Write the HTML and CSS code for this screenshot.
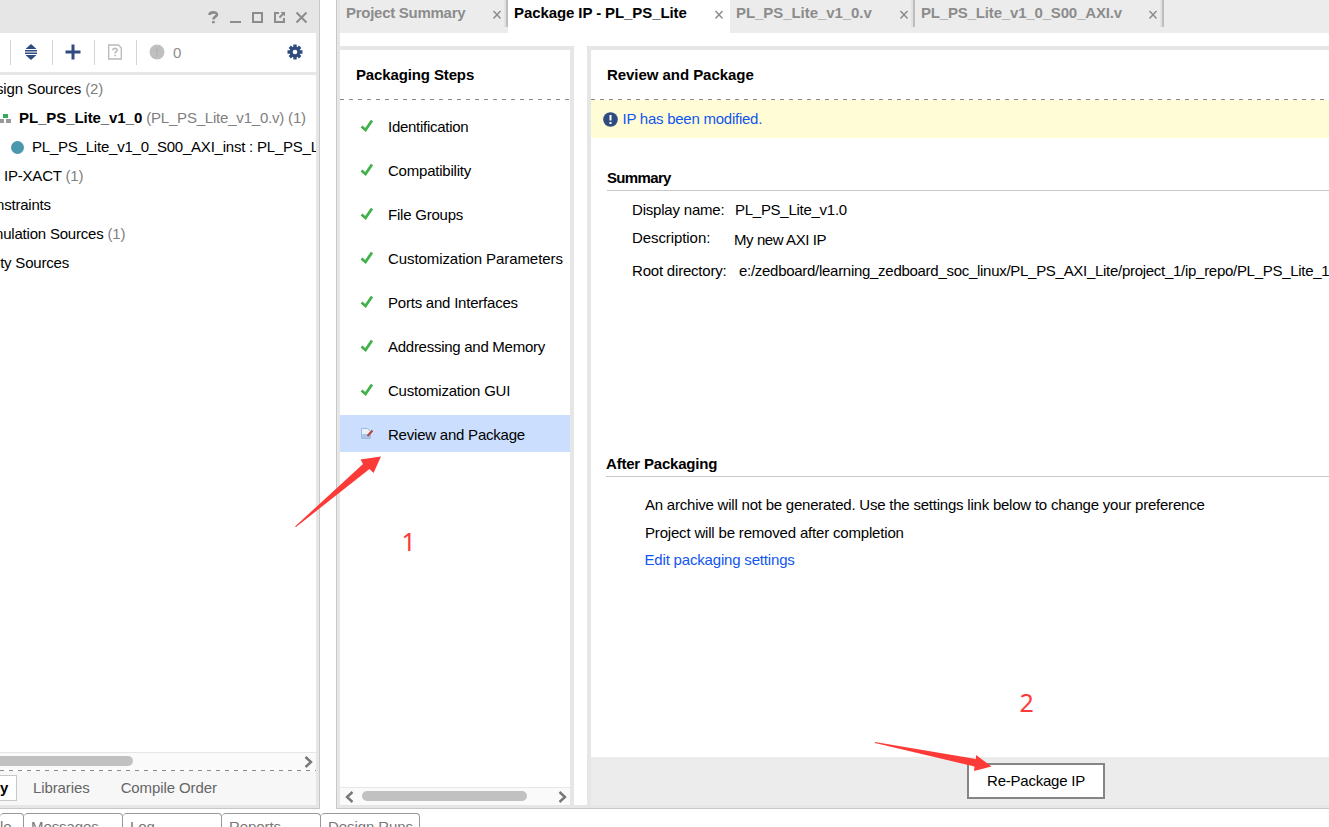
FILE: index.html
```html
<!DOCTYPE html>
<html lang="en">
<head>
<meta charset="utf-8">
<title>Package IP</title>
<link rel="stylesheet" href="styles.css">
</head>
<body>
<div class="workspace">
  <section class="sources">
    <header class="titlebar">
      <svg width="106" height="16" viewBox="0 0 106 16" fill="none" stroke="#8c8c8c" stroke-width="2">
        <path d="M1.500 6C1.500 2.600 9 2.500 9 5.500C9 7.700 5.400 7.600 5.400 10.500M5.400 12v2.200" stroke-width="2.600"/>
        <path d="M22 13h11"/>
        <path d="M45 4h9v9h-9z"/>
        <path d="M71 4h-4v9h9v-4M71.500 8.500l4-4"/><path d="M72.500 3H77v4.500z" fill="#8c8c8c" stroke="none"/>
        <path d="M88.500 3.500l10 10M98.500 3.500l-10 10"/>
      </svg>
    </header>
    <div class="toolbar">
      <i class="sep"></i>
      <span class="tool"><svg width="14" height="16" viewBox="0 0 14 16" fill="#2f4b80"><path d="M7 0l5.500 5H1.500zM1 6h12v1.500H1zM1 8.500h12V10H1zM1.500 11h11L7 16z"/></svg></span>
      <i class="sep"></i>
      <span class="tool"><svg width="16" height="16" viewBox="0 0 16 16" fill="none" stroke="#2f4b80" stroke-width="3"><path d="M8 .5v15M.5 8h15"/></svg></span>
      <i class="sep"></i>
      <span class="tool"><svg width="14" height="16" viewBox="0 0 14 16" fill="none" stroke="#b9b9b9"><path d="M.7 1h9.800L13.300 4v11H.7z" stroke-width="1.300"/><path d="M4.700 6.200C4.700 3.700 9.300 3.800 9.200 6.200C9.100 7.600 7 7.600 7 9.500M7 10.700v1.600" stroke-width="1.600"/></svg></span>
      <i class="sep"></i>
      <span class="count"><svg width="16" height="16" viewBox="0 0 16 16"><circle cx="8" cy="8" r="7.500" fill="#bfbfbf"/><path d="M8 4v5M8 10.500v1.500" stroke="#b3b3b3" stroke-width="1.500"/></svg>0</span>
      <svg class="gear" width="16" height="16" viewBox="-8 -8 16 16"><g stroke="#2f4b80" stroke-width="3.400"><path d="M0-7.500v15M-7.500 0h15M-5.200-5.200l10.400 10.400M5.200-5.200l-10.400 10.400"/></g><circle r="5.400" fill="#2f4b80"/><circle r="2.300" fill="#fff"/></svg>
    </div>
    <div class="tree">
      <div class="row r1">sign Sources <em>(2)</em></div>
      <div class="row r2"><svg width="12" height="12" viewBox="0 0 12 12"><path fill="#35ab57" d="M3 2h5v4H3z"/><path fill="#999" d="M0 7h4v4H0zM6 7h5v4H6z"/></svg><b>PL_PS_Lite_v1_0</b><em>(PL_PS_Lite_v1_0.v) (1)</em></div>
      <div class="row r3"><i class="dot"></i>PL_PS_Lite_v1_0_S00_AXI_inst : PL_PS_L</div>
      <div class="row r4">IP-XACT <em>(1)</em></div>
      <div class="row r5">nstraints</div>
      <div class="row r6">nulation Sources <em>(1)</em></div>
      <div class="row r7">ity Sources</div>
    </div>
    <div class="scroll scroll-left"><span class="thumb"></span><svg width="9" height="12" viewBox="0 0 9 12" fill="none" stroke="#777" stroke-width="2.400"><path d="M1.500 1l5.500 5-5.500 5"/></svg></div>
    <div class="dash"></div>
    <nav class="view-tabs"><b>y</b><span class="lib">Libraries</span><span>Compile Order</span></nav>
  </section>

  <section class="editor">
    <nav class="file-tabs">
      <div class="tab t1"><span>Project Summary</span><svg width="10" height="10" viewBox="0 0 10 10"><path d="M1.500 1l7 7.500M8.500 1l-7 7.500"/></svg></div>
      <div class="tab t2 active"><span>Package IP - PL_PS_Lite</span><svg width="10" height="10" viewBox="0 0 10 10"><path d="M1.500 1l7 7.500M8.500 1l-7 7.500"/></svg></div>
      <div class="tab t3"><span>PL_PS_Lite_v1_0.v</span><svg width="10" height="10" viewBox="0 0 10 10"><path d="M1.500 1l7 7.500M8.500 1l-7 7.500"/></svg></div>
      <div class="tab t4"><span>PL_PS_Lite_v1_0_S00_AXI.v</span><svg width="10" height="10" viewBox="0 0 10 10"><path d="M1.500 1l7 7.500M8.500 1l-7 7.500"/></svg></div>
    </nav>
    <div class="panes">
      <aside class="steps">
        <h2>Packaging Steps</h2>
        <div class="dash"></div>
        <ul>
          <li class="tight"><svg width="14" height="14" viewBox="0 0 14 14"><path d="M1.500 7.500L5.500 11L12 1.500" /></svg><span>Identification</span></li>
          <li><svg width="14" height="14" viewBox="0 0 14 14"><path d="M1.500 7.500L5.500 11L12 1.500" /></svg><span>Compatibility</span></li>
          <li><svg width="14" height="14" viewBox="0 0 14 14"><path d="M1.500 7.500L5.500 11L12 1.500" /></svg><span>File Groups</span></li>
          <li class="loose"><svg width="14" height="14" viewBox="0 0 14 14"><path d="M1.500 7.500L5.500 11L12 1.500" /></svg><span>Customization Parameters</span></li>
          <li><svg width="14" height="14" viewBox="0 0 14 14"><path d="M1.500 7.500L5.500 11L12 1.500" /></svg><span>Ports and Interfaces</span></li>
          <li class="tight"><svg width="14" height="14" viewBox="0 0 14 14"><path d="M1.500 7.500L5.500 11L12 1.500" /></svg><span>Addressing and Memory</span></li>
          <li><svg width="14" height="14" viewBox="0 0 14 14"><path d="M1.500 7.500L5.500 11L12 1.500" /></svg><span>Customization GUI</span></li>
          <li class="selected"><svg class="edit" width="14" height="14" viewBox="0 0 14 14"><path fill="#e9f2fb" stroke="#9dbbe0" d="M1.500 1.500h6l3 3v7h-9z"/><path fill="#a9c6e8" stroke="none" d="M2 7h8v4H2z"/><path stroke="#b5443a" stroke-width="2" d="M12.500 3.500L7.500 9"/></svg><span>Review and Package</span></li>
        </ul>
        <div class="scroll scroll-steps"><svg width="9" height="12" viewBox="0 0 9 12" fill="none" stroke="#777" stroke-width="2.400"><path d="M7.500 1L2 6l5.500 5"/></svg><span class="thumb"></span><svg width="9" height="12" viewBox="0 0 9 12" fill="none" stroke="#777" stroke-width="2.400"><path d="M1.500 1L7 6l-5.500 5"/></svg></div>
      </aside>
      <main class="review">
        <h2>Review and Package</h2>
        <div class="dash"></div>
        <div class="notice"><svg width="15" height="15" viewBox="0 0 15 15"><circle cx="7.500" cy="7.500" r="7.300" fill="#2f4b80"/><path d="M7.500 3v5.500M7.500 10v2" stroke="#fff" stroke-width="2"/></svg><a>IP has been modified.</a></div>
        <section class="summary">
          <h3>Summary</h3>
          <dl>
            <dt>Display name:</dt><dd class="name">PL_PS_Lite_v1.0</dd>
            <dt class="dt-desc">Description:</dt><dd class="desc">My new AXI IP</dd>
            <dt>Root directory:</dt><dd class="root">e:/zedboard/learning_zedboard_soc_linux/PL_PS_AXI_Lite/project_1/ip_repo/PL_PS_Lite_1</dd>
          </dl>
        </section>
        <section class="after">
          <h3>After Packaging</h3>
          <p class="archive">An archive will not be generated. Use the settings link below to change your preference</p>
          <p class="removed">Project will be removed after completion</p>
          <p class="edit-link"><a>Edit packaging settings</a></p>
        </section>
        <footer><button>Re-Package IP</button></footer>
      </main>
    </div>
  </section>
</div>
<nav class="console-tabs"><span class="c0">le</span><span>Messages</span><span>Log</span><span>Reports</span><span>Design Runs</span></nav>
<svg class="marks" width="1329" height="827" viewBox="0 0 1329 827" fill="#fc3a38">
  <path d="M295 526.500L363 464l-2.500-4.500L381 456.500L373.500 473l-4-4L296 527z"/>
  <path d="M875 742l101 17v-4l15.500 11.500L974 771l.5-4.500L875 743z"/>
  <text x="401.500" y="551">1</text>
  <text x="1019.500" y="712">2</text>
</svg>
</body>
</html>
```
FILE: styles.css
```css
* { box-sizing: border-box; }
body {
  margin: 0; width: 1329px; height: 827px; overflow: hidden; background: #fff;
  font: 15px/18px "Liberation Sans", Arial, sans-serif; color: #000;
}
svg { display: block; flex: none; }
h2, h3, p, ul, dl, dd { margin: 0; padding: 0; }
h2, h3 { font-size: 15px; font-weight: bold; white-space: nowrap; }
em { font-style: normal; color: #808080; }
a { color: #1155f0; }

.workspace { display: flex; gap: 16px; height: 809px; }
.dash { height: 1px; flex: none; background: repeating-linear-gradient(90deg, #8a8a8a 0 4px, transparent 4px 9px); }

.sources {
  width: 320px; flex: none; display: flex; flex-direction: column; overflow: hidden;
  border-right: 1px solid #c8c8c8; border-bottom: 1px solid #c8c8c8;
  box-shadow: inset -3px -3px #e6e6e6; padding: 0 3px 3px 0;
}
.titlebar { height: 33px; background: #e6e6e6; display: flex; padding: 9px 0 0 208px; flex: none; }
.toolbar { height: 42px; flex: none; display: flex; align-items: center; border-bottom: 3px solid #e6e6e6; padding: 0 13px 0 10px; }
.sep { width: 1px; height: 25px; background: #d4d4d4; }
.tool { width: 41px; display: flex; justify-content: center; padding-right: 1px; }
.count { display: flex; gap: 8px; align-items: center; padding-left: 12px; color: #8c8c8c; line-height: 16px; }
.toolbar svg { margin-bottom: 1px; }
.toolbar .gear { margin-left: auto; }
.tree { flex: 1; overflow: hidden; letter-spacing: -0.200px; }
.row { height: 29px; display: flex; align-items: center; white-space: pre; padding-bottom: 2px; }
.row.r1 { margin-left: -4px; letter-spacing: -0.130px; }
.row.r2 svg { margin-right: 7px; }
.row b { letter-spacing: -0.070px; margin-right: 4px; }
.row.r3 { padding-left: 11px; letter-spacing: -0.220px; }
.row.r4 { padding-left: 4px; }
.row.r5 { margin-left: -4px; }
.row.r6 { margin-left: -5px; }
.row.r7 { margin-left: -3px; }
.dot { width: 13px; height: 13px; flex: none; border-radius: 50%; background: #4a97ae; margin: 2px 8px 0 0; }
.scroll { height: 18px; flex: none; background: #fafafa; border-top: 1px solid #e6e6e6; display: flex; align-items: center; }
.thumb { height: 10px; border-radius: 5px; background: #c1c1c1; }
.scroll-left { justify-content: space-between; padding-right: 3px; }
.scroll-left .thumb { width: 133px; border-radius: 0 5px 5px 0; }
.scroll-left .thumb, .scroll-steps .thumb { margin-bottom: 2px; }
.view-tabs { height: 34px; flex: none; background: #f7f7f7; display: flex; align-items: center; color: #666; letter-spacing: -0.100px; }
.view-tabs b { width: 17px; height: 26px; border: 1px solid #c8c8c8; border-left: 0; background: #fff; color: #000; line-height: 24px; margin-right: 16px; }
.lib { margin-right: 31px; }

.editor {
  flex: 1; min-width: 0; display: flex; flex-direction: column;
  border-left: 1px solid #c8c8c8; border-bottom: 1px solid #c8c8c8;
  box-shadow: inset 3px -3px #e6e6e6; padding: 0 0 3px 3px;
}
.file-tabs { height: 33px; flex: none; display: flex; align-items: flex-start; background: #ececec; margin-bottom: 13px; font-weight: bold; color: #8c8c8c; }
.tab { height: 27px; display: flex; justify-content: space-between; white-space: nowrap; padding: 4px 4px 0 6px; border-right: 2px solid #bdbdbd; box-shadow: inset -2px 0 #e2e2e2; }
.tab svg { margin-top: 6px; fill: none; stroke: #8c8c8c; stroke-width: 1.500px; }
.t1 { width: 168px; letter-spacing: -0.270px; }
.tab.active { width: 222px; height: 33px; background: #fff; color: #000; border: 0; padding-right: 6px; box-shadow: none; letter-spacing: -0.090px; }
.t3 { width: 185px; letter-spacing: -0.060px; }
.t4 { width: 249px; letter-spacing: -0.170px; }
.panes { flex: 1; display: flex; gap: 13px; min-height: 0; }
.panes h2 { height: 49px; flex: none; padding: 16px 16px 0; letter-spacing: -0.050px; }
.panes .steps h2 { letter-spacing: -0.130px; }
.steps { width: 234px; flex: none; border: solid #e6e6e6; border-width: 4px 4px 0 0; display: flex; flex-direction: column; }
.steps ul { list-style: none; flex: 1; display: flex; flex-direction: column; gap: 7px; padding-top: 7px; }
.steps li { height: 37px; display: flex; align-items: center; gap: 14px; padding: 3px 0 0 20px; white-space: nowrap; letter-spacing: -0.220px; }
.steps .tight { letter-spacing: -0.270px; }
.steps .loose { letter-spacing: -0.080px; }
.steps li svg { fill: none; stroke: #41b14c; stroke-width: 2.800px; margin-top: -3px; }
.steps li .edit { stroke-width: 1px; }
.selected { background: #cbdefe; }
.scroll-steps { padding: 0 3px 0 5px; }
.scroll-steps .thumb { width: 165px; margin: 0 31px 2px 8px; }
.review { flex: 1; min-width: 0; border: solid #e6e6e6; border-width: 4px 0 0 4px; display: flex; flex-direction: column; }
.notice { height: 38px; flex: none; background: #fffcd6; display: flex; align-items: center; gap: 4.500px; padding-left: 12px; letter-spacing: -0.250px; }
.summary { height: 286px; flex: none; padding: 31px 0 0 16px; }
.review h3 { height: 22px; border-bottom: 1px solid #c8c8c8; }
.summary h3 { letter-spacing: -0.650px; }
.after h3 { letter-spacing: -0.200px; }
dl { display: grid; grid-template-columns: 95px 1fr; padding: 10px 0 0 25px; white-space: nowrap; }
dt { grid-column: 1; height: 28px; letter-spacing: -0.200px; }
.dt-desc { letter-spacing: -0.080px; }
dt:last-of-type { padding-top: 5px; }
.name { padding-left: 8px; letter-spacing: -0.270px; }
.desc { padding: 2px 0 0 7px; height: 28px; letter-spacing: -0.420px; }
.root { padding: 5px 0 0 12px; letter-spacing: -0.285px; }
.after { flex: 1; padding: 31px 0 0 15px; }
.after p { padding-left: 39px; height: 28px; white-space: nowrap; letter-spacing: -0.180px; }
.after .archive { margin-top: 19px; letter-spacing: -0.220px; }
.after .removed { height: 27px; }
.after .edit-link { padding-left: 38.500px; }
.review footer { height: 48px; flex: none; background: #ececec; padding: 6px 0 0 376px; }
button { width: 138px; height: 36px; border: 2px solid #858585; background: #fff; font: inherit; padding: 0; letter-spacing: -0.230px; }

.console-tabs { margin-top: 4px; display: flex; color: #777; }
.console-tabs span { width: 99px; height: 30px; border: 1px solid #999; border-left: 0; border-radius: 4px 4px 0 0; padding: 4px 0 0 7px; letter-spacing: -0.080px; }
.console-tabs .c0 { width: 24px; padding-left: 0; }
.marks { position: absolute; left: 0; top: 0; pointer-events: none; }
.marks text { font: 25px "Noto Sans", sans-serif; }
```
